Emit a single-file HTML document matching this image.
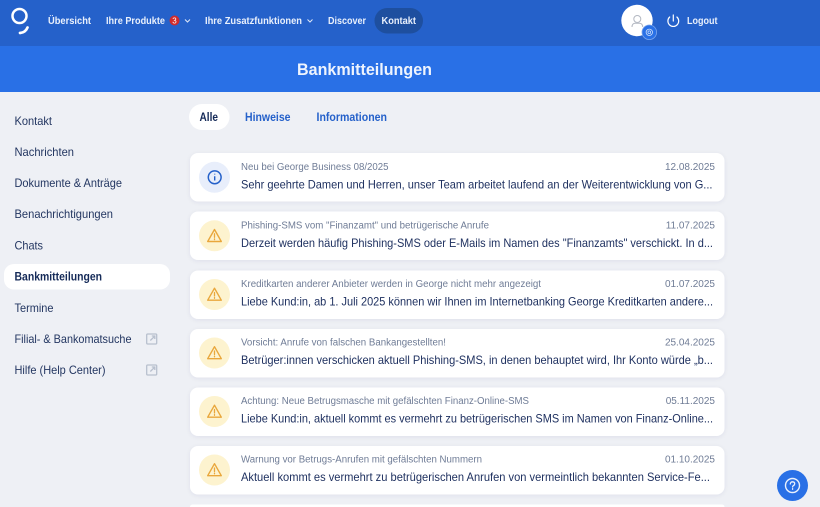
<!DOCTYPE html>
<html lang="de"><head><meta charset="utf-8"><title>Bankmitteilungen</title>
<style>
html,body{margin:0;padding:0;width:820px;height:507px;overflow:hidden;background:#eef0f5}
svg{display:block}
text{font-family:"Liberation Sans",sans-serif}
.n{font-size:10.3px;font-weight:700;fill:#e9f0fc}
.s{font-size:11.7px;fill:#233661}
.t{font-size:10px;fill:#6f7c96}
.b{font-size:11.7px;fill:#1f3160}
.d{font-size:10px;fill:#6f7c96}
</style></head><body>
<svg width="820" height="507" viewBox="0 0 820 507" xmlns="http://www.w3.org/2000/svg">
<defs>
<filter id="sh" x="-5%" y="-20%" width="110%" height="150%"><feDropShadow dx="0" dy="1" stdDeviation="2" flood-color="#1c2f5b" flood-opacity=".07"/></filter>
<g id="warn"><circle cx="0" cy="0" r="15.5" fill="#fdf3cf"/><path d="M0-6.300L6.800 5.700H-6.800Z" fill="none" stroke="#e9a73c" stroke-width="1.400" stroke-linejoin="round"/><path d="M0-2V1.500M0 3.100V3.800" stroke="#e9a73c" stroke-width="1.300" stroke-linecap="round"/></g>
<g id="ext" fill="none" stroke="#b8c0ce" stroke-width="1.300"><rect x=".7" y="1" width="10" height="10" rx="1"/><path d="M4.300 7.500L8.600 3.300M5.800 3H8.800V6"/></g>
</defs>
<rect width="820" height="507" fill="#eef0f5"/>
<rect width="820" height="46" fill="#2561ca"/>
<rect y="46" width="820" height="46" fill="#2970e6"/>

<circle cx="19.500" cy="16" r="7" fill="none" stroke="#fff" stroke-width="2.500"/>
<path d="M20 33Q25.500 32.500 27.500 27.500" fill="none" stroke="#fff" stroke-width="2.700" stroke-linecap="round"/>

<text class="n" x="48" y="24" textLength="43" lengthAdjust="spacingAndGlyphs">Übersicht</text>
<text class="n" x="106" y="24" textLength="59" lengthAdjust="spacingAndGlyphs">Ihre Produkte</text>
<circle cx="174.500" cy="20.500" r="5" fill="#d02b2b"/>
<text x="174.500" y="23.500" font-size="8" fill="#fff" text-anchor="middle">3</text>
<path d="M185 19.500L187.500 22L190 19.500" fill="none" stroke="#dfe8f8" stroke-width="1"/>
<text class="n" x="205" y="24" textLength="97" lengthAdjust="spacingAndGlyphs">Ihre Zusatzfunktionen</text>
<path d="M307.500 19.500L310 22L312.500 19.500" fill="none" stroke="#dfe8f8" stroke-width="1"/>
<text class="n" x="328" y="24" textLength="38" lengthAdjust="spacingAndGlyphs">Discover</text>
<rect x="374.500" y="8" width="48.500" height="25.500" rx="12.700" fill="#1e4f9f"/>
<text class="n" x="381.500" y="24" textLength="34.500" lengthAdjust="spacingAndGlyphs">Kontakt</text>

<circle cx="637" cy="20.500" r="15.700" fill="#fff"/>
<circle cx="637.300" cy="19" r="3.500" fill="none" stroke="#b3b8c2" stroke-width="1"/>
<path d="M632 27Q632 23.500 635 23.200H639.500Q642.700 23.500 642.700 27" fill="none" stroke="#b3b8c2" stroke-width="1"/>
<circle cx="649.300" cy="32.300" r="7.300" fill="#2970e6" stroke="#7aa6ee" stroke-width=".8"/>
<circle cx="649.300" cy="32.300" r="3.200" fill="none" stroke="#cfe0fa" stroke-width=".8"/>
<circle cx="649.300" cy="32.300" r="1.400" fill="none" stroke="#cfe0fa" stroke-width=".7"/>
<path d="M669.700 17A5.400 5.400 0 1 0 676.900 17" fill="none" stroke="#fff" stroke-width="1.200" stroke-linecap="round"/>
<path d="M673.300 15V21" stroke="#fff" stroke-width="1.200" stroke-linecap="round"/>
<text class="n" x="687" y="24" textLength="30.500" lengthAdjust="spacingAndGlyphs">Logout</text>

<text x="297" y="75" font-size="16.500" font-weight="700" fill="#eef4fe" textLength="135" lengthAdjust="spacingAndGlyphs">Bankmitteilungen</text>

<rect x="4" y="264" width="166" height="25.500" rx="10" fill="#fff"/>
<text class="s" x="14.500" y="125" textLength="37.500" lengthAdjust="spacingAndGlyphs">Kontakt</text>
<text class="s" x="14.500" y="156" textLength="59.500" lengthAdjust="spacingAndGlyphs">Nachrichten</text>
<text class="s" x="14.500" y="187" textLength="107.500" lengthAdjust="spacingAndGlyphs">Dokumente &amp; Anträge</text>
<text class="s" x="14.500" y="218" textLength="98.500" lengthAdjust="spacingAndGlyphs">Benachrichtigungen</text>
<text class="s" x="14.500" y="249.500" textLength="28.500" lengthAdjust="spacingAndGlyphs">Chats</text>
<text class="s" x="14.500" y="280.500" textLength="87.500" lengthAdjust="spacingAndGlyphs" font-weight="700" style="fill:#152a58">Bankmitteilungen</text>
<text class="s" x="14.500" y="312" textLength="39" lengthAdjust="spacingAndGlyphs">Termine</text>
<text class="s" x="14.500" y="343" textLength="117" lengthAdjust="spacingAndGlyphs">Filial- &amp; Bankomatsuche</text>
<use href="#ext" x="146" y="333"/>
<text class="s" x="14.500" y="374" textLength="91" lengthAdjust="spacingAndGlyphs">Hilfe (Help Center)</text>
<use href="#ext" x="146" y="364"/>

<rect x="189" y="104" width="40.500" height="26" rx="13" fill="#fff"/>
<text x="199.500" y="121" font-size="11.500" font-weight="700" fill="#152a58" textLength="18.500" lengthAdjust="spacingAndGlyphs">Alle</text>
<text x="245" y="121" font-size="11.500" font-weight="700" fill="#2561ca" textLength="45.500" lengthAdjust="spacingAndGlyphs">Hinweise</text>
<text x="316.500" y="121" font-size="11.500" font-weight="700" fill="#2561ca" textLength="70.500" lengthAdjust="spacingAndGlyphs">Informationen</text>

<g filter="url(#sh)" fill="#fff">
<rect x="190" y="153" width="534.500" height="48.500" rx="8"/>
<rect x="190" y="211.500" width="534.500" height="48.500" rx="8"/>
<rect x="190" y="270.500" width="534.500" height="48.500" rx="8"/>
<rect x="190" y="329" width="534.500" height="48.500" rx="8"/>
<rect x="190" y="387.500" width="534.500" height="48.500" rx="8"/>
<rect x="190" y="446" width="534.500" height="48.500" rx="8"/>
</g>
<path d="M190 507Q190 504.500 193 504.500H721.500Q724.500 504.500 724.500 507Z" fill="#fff"/>

<circle cx="214.500" cy="177.300" r="15.500" fill="#e8eefb"/>
<circle cx="214.700" cy="177.300" r="6.400" fill="none" stroke="#2561ca" stroke-width="1.500"/>
<path d="M214.700 176.300V180.500M214.700 173.700V174.500" stroke="#2561ca" stroke-width="1.400"/>
<text class="t" x="241" y="170" textLength="147.500" lengthAdjust="spacingAndGlyphs">Neu bei George Business 08/2025</text>
<text class="d" x="715" y="170" text-anchor="end">12.08.2025</text>
<text class="b" x="241" y="188.500" textLength="471.500" lengthAdjust="spacingAndGlyphs">Sehr geehrte Damen und Herren, unser Team arbeitet laufend an der Weiterentwicklung von G...</text>

<use href="#warn" x="214.500" y="235.800"/>
<text class="t" x="241" y="228.500" textLength="248" lengthAdjust="spacingAndGlyphs">Phishing-SMS vom "Finanzamt" und betrügerische Anrufe</text>
<text class="d" x="715" y="228.500" text-anchor="end">11.07.2025</text>
<text class="b" x="241" y="247" textLength="472" lengthAdjust="spacingAndGlyphs">Derzeit werden häufig Phishing-SMS oder E-Mails im Namen des "Finanzamts" verschickt. In d...</text>

<use href="#warn" x="214.500" y="294.500"/>
<text class="t" x="241" y="287" textLength="300" lengthAdjust="spacingAndGlyphs">Kreditkarten anderer Anbieter werden in George nicht mehr angezeigt</text>
<text class="d" x="715" y="287" text-anchor="end">01.07.2025</text>
<text class="b" x="241" y="305.500" textLength="472" lengthAdjust="spacingAndGlyphs">Liebe Kund:in, ab 1. Juli 2025 können wir Ihnen im Internetbanking George Kreditkarten andere...</text>

<use href="#warn" x="214.500" y="353"/>
<text class="t" x="241" y="345.500" textLength="205" lengthAdjust="spacingAndGlyphs">Vorsicht: Anrufe von falschen Bankangestellten!</text>
<text class="d" x="715" y="345.500" text-anchor="end">25.04.2025</text>
<text class="b" x="241" y="364" textLength="472" lengthAdjust="spacingAndGlyphs">Betrüger:innen verschicken aktuell Phishing-SMS, in denen behauptet wird, Ihr Konto würde „b...</text>

<use href="#warn" x="214.500" y="411.500"/>
<text class="t" x="241" y="404" textLength="288" lengthAdjust="spacingAndGlyphs">Achtung: Neue Betrugsmasche mit gefälschten Finanz-Online-SMS</text>
<text class="d" x="715" y="404" text-anchor="end">05.11.2025</text>
<text class="b" x="241" y="422.500" textLength="472" lengthAdjust="spacingAndGlyphs">Liebe Kund:in, aktuell kommt es vermehrt zu betrügerischen SMS im Namen von Finanz-Online...</text>

<use href="#warn" x="214.500" y="470"/>
<text class="t" x="241" y="462.500" textLength="241" lengthAdjust="spacingAndGlyphs">Warnung vor Betrugs-Anrufen mit gefälschten Nummern</text>
<text class="d" x="715" y="462.500" text-anchor="end">01.10.2025</text>
<text class="b" x="241" y="481" textLength="469" lengthAdjust="spacingAndGlyphs">Aktuell kommt es vermehrt zu betrügerischen Anrufen von vermeintlich bekannten Service-Fe...</text>

<circle cx="792.500" cy="485.500" r="15.500" fill="#2970e6"/>
<circle cx="792.500" cy="485.500" r="7" fill="none" stroke="#e8f0fd" stroke-width="1.400"/>
<path d="M790.300 484Q790.500 481.800 792.600 481.800Q794.800 482 794.700 483.800Q794.600 485 793.300 485.700Q792.600 486.100 792.600 487M792.600 488.600V489.300" fill="none" stroke="#e8f0fd" stroke-width="1.300" stroke-linecap="round"/>
</svg>
</body></html>
